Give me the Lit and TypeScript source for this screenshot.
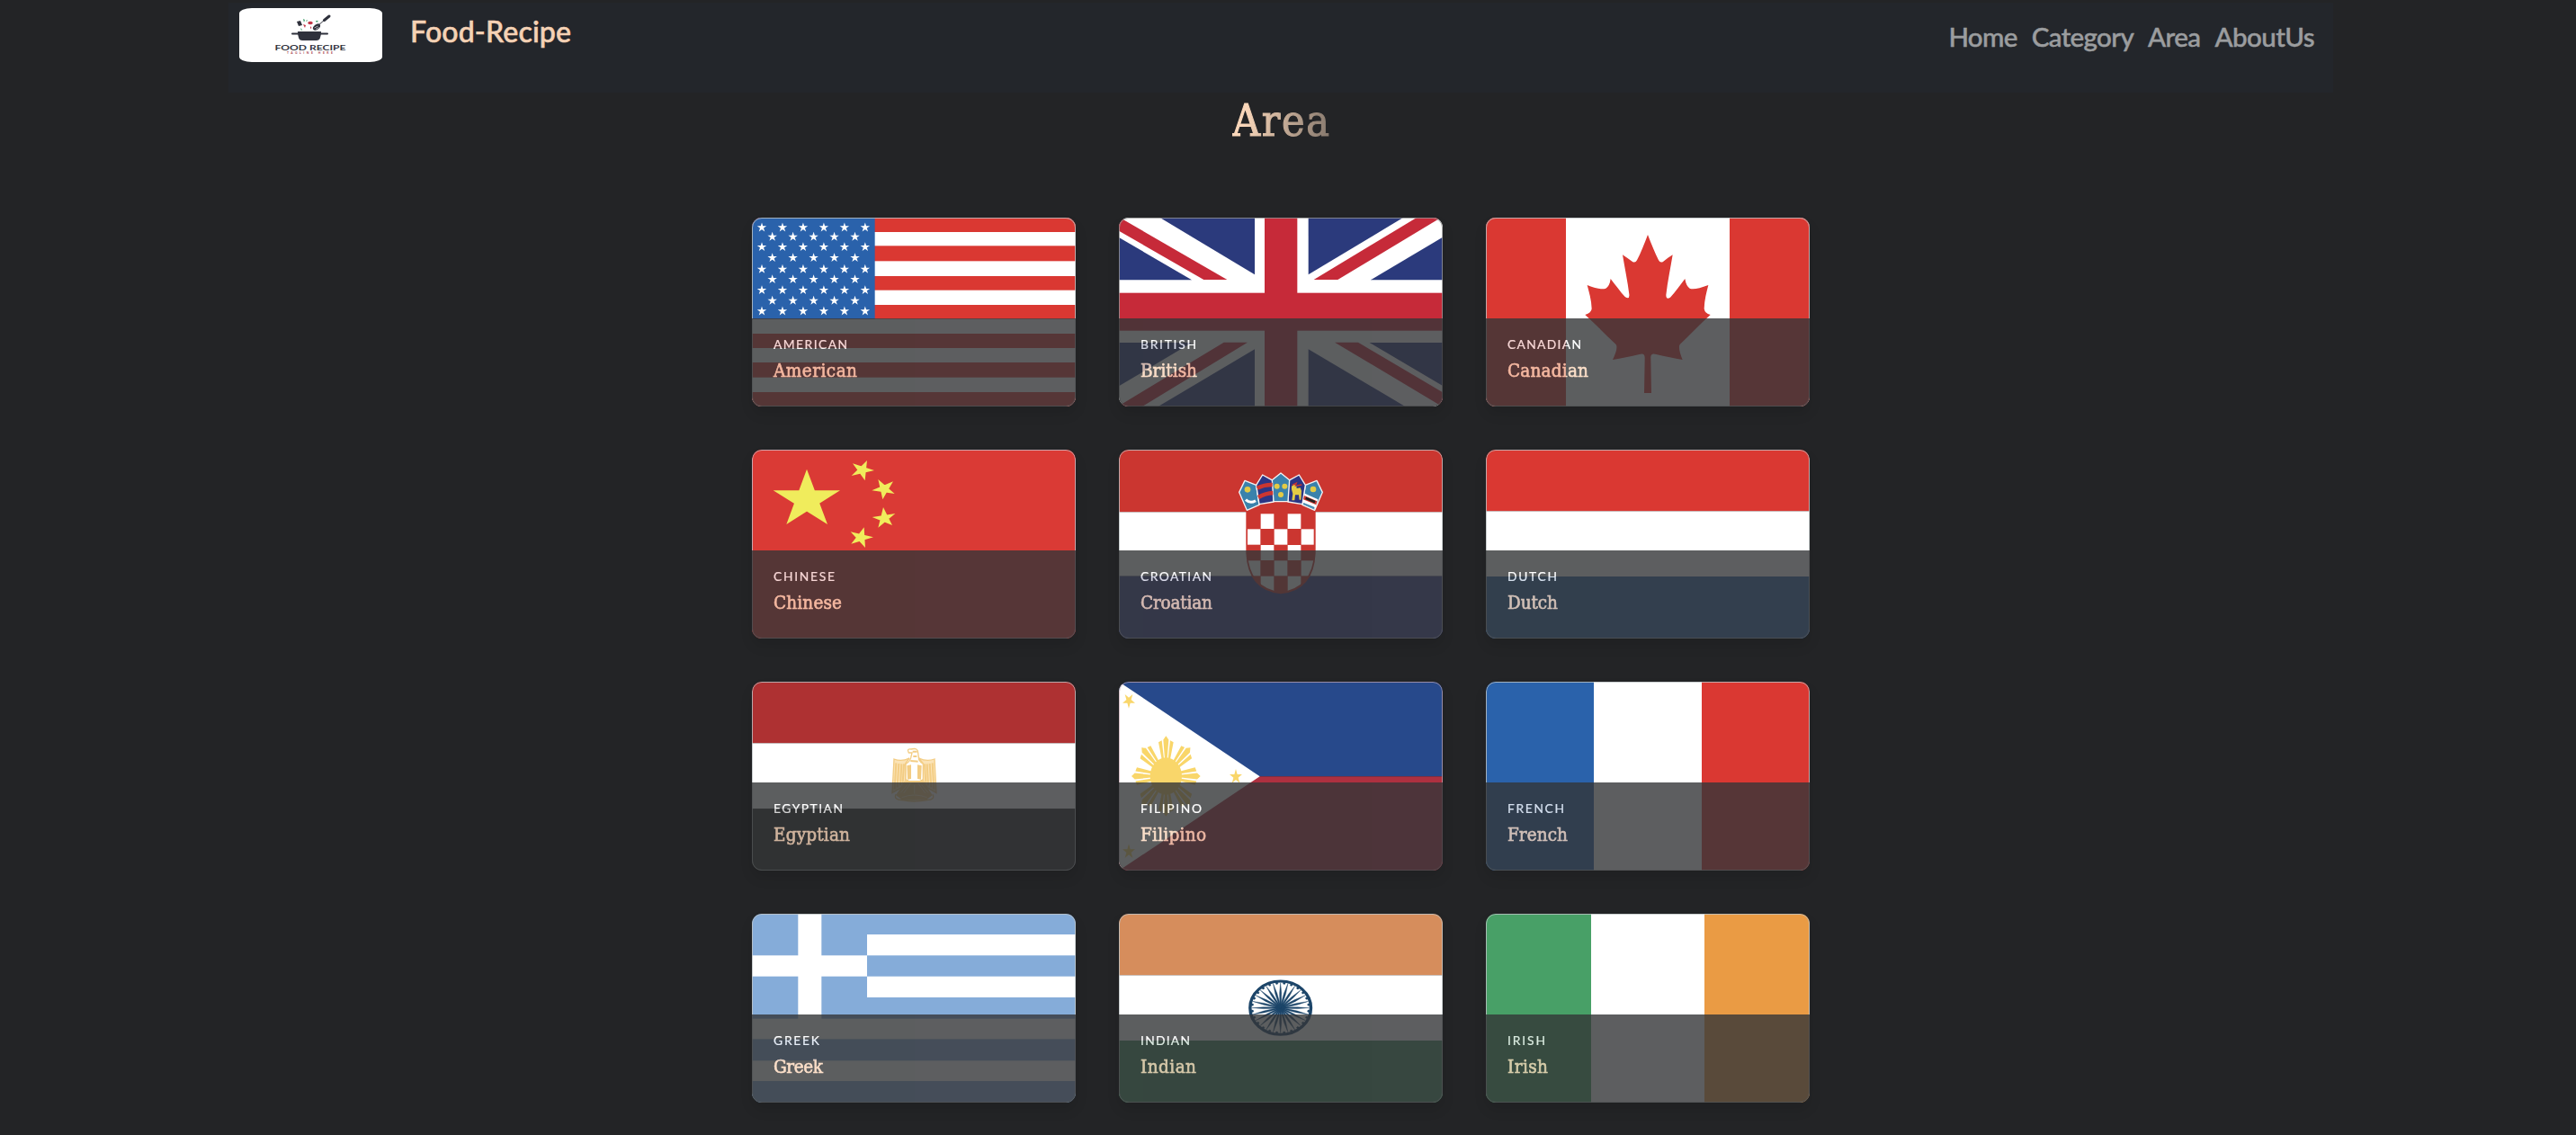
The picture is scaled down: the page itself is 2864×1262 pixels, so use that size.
import { LitElement, html, svg, css, type SVGTemplateResult } from "lit";
import { customElement, property } from "lit/decorators.js";

/* Text whose tracking is adjusted so that it fills a set measure. */
@customElement("tracked-text")
class TrackedText extends LitElement {
  @property() text = "";
  @property({ type: Number }) measure = 0;

  static styles = css`
    :host { display: block; white-space: nowrap; }
    .text { display: inline-block; }
  `;

  updated() {
    const el = this.renderRoot.querySelector(".text") as HTMLElement;
    el.style.letterSpacing = "0px";
    const natural = el.getBoundingClientRect().width;
    const gaps = this.text.length - 1;
    if (this.measure && gaps > 0) {
      el.style.letterSpacing = `${((this.measure - natural) / gaps).toFixed(3)}px`;
    }
  }

  render() {
    return html`<span class="text">${this.text}</span>`;
  }
}

const RED = "#da3832";
const BLUE = "#2a62ab";

const rect = (x: number, y: number, x2: number, y2: number, fill: string) =>
  svg`<rect x=${x} y=${y} width=${x2 - x} height=${y2 - y} fill=${fill}></rect>`;
const poly = (points: string, fill: string) => svg`<polygon points=${points} fill=${fill}></polygon>`;

/* Pentagram through five outer points; the nonzero rule fills its centre. */
const starThrough = (p: number[][], fill: string) =>
  poly([0, 2, 4, 1, 3].map((i) => p[i].join(",")).join(" "), fill);
const star = (cx: number, cy: number, r: number, fill: string, turn = 0, sy = 1) =>
  starThrough(
    [0, 1, 2, 3, 4].map((i) => {
      const a = ((i * 72 + turn - 90) * Math.PI) / 180;
      return [+(cx + r * Math.cos(a)).toFixed(1), +(cy + sy * r * Math.sin(a)).toFixed(1)];
    }),
    fill,
  );

function american() {
  const edges = [66, 114, 160, 211, 261, 308, 357, 404, 453, 501, 549, 599, 648, 696];
  const rows = [99, 130, 164, 200, 238, 272, 308, 343, 378];
  return svg`
    ${rect(48, 66, 1128, 696, "#fff")}
    ${edges.slice(0, -1).map((y, i) => (i % 2 ? null : rect(48, y, 1128, edges[i + 1], RED)))}
    ${rect(48, 66, 458, 404, BLUE)}
    ${rows.map((y, r) =>
      Array.from({ length: r % 2 ? 5 : 6 }, (_, c) => star((r % 2 ? 116 : 81) + c * 68.9, y, 16.5, "#fff")),
    )}`;
}

function british() {
  const blue = "#2b3a7c";
  const red = "#c62a39";
  return svg`
    ${rect(42, 66, 1122, 696, "#fff")}
    ${poly("179,66 495,66 495,256", blue)}${poly("42,132 42,274 285,274", blue)}
    ${poly("674,66 990,66 674,256", blue)}${poly("1122,131 1122,274 881,274", blue)}
    ${poly("42,483 285,483 42,628", blue)}${poly("495,505 495,696 173,696", blue)}
    ${poly("674,505 674,696 997,696", blue)}${poly("878,483 1122,483 1122,627", blue)}
    ${poly("42,64 42,110 325,273 403,273", red)}${poly("1035,66 1116,66 772,273 692,273", red)}
    ${poly("392,482 471,482 120,696 42,696 42,694", red)}${poly("762,482 840,482 1122,649 1122,696 1120,696", red)}
    ${rect(42, 317, 1122, 443, red)}${rect(528, 66, 637, 696, red)}`;
}

function canadian() {
  return svg`
    ${rect(36, 66, 1116, 696, "#fff")}
    ${rect(36, 66, 303, 696, RED)}${rect(849, 66, 1116, 696, RED)}
    <path fill=${RED} d="M576 123 C588 154 600 184 612 208 Q618 219 628 212 C638 204 648 197 659 190
      C652 234 642 280 637 324 Q637 341 651 332 C669 313 684 290 700 270 Q704 294 716 302 Q733 308 778 291
      C772 314 765 340 764 370 Q766 385 785 390 C748 423 718 456 683 489 Q676 500 692 540
      C664 535 635 530 604 522 Q584 516 586 536 L588 651 H564 L566 536 Q567 516 548 522
      C518 530 488 535 459 540 Q478 500 470 489 C434 456 404 423 367 390 Q388 384 389 370
      C388 340 380 314 374 291 Q419 309 436 302 Q449 294 452 270 C468 290 484 313 500 330
      Q516 341 514 322 C509 280 499 234 492 190 C503 197 514 205 524 212 Q534 219 540 208 C553 184 564 154 576 123Z"></path>`;
}

function chinese() {
  const gold = "#f0ec5c";
  return svg`
    ${rect(48, 60, 1128, 690, "#da3a35")}
    ${starThrough([[231, 125], [342, 196], [300, 309], [163, 309], [119, 196]], gold)}
    ${starThrough([[432, 96], [456, 129], [425, 163], [380, 147], [384, 106]], gold)}
    ${starThrough([[469, 159], [519, 166], [524, 207], [484, 226], [448, 196]], gold)}
    ${starThrough([[486, 252], [526, 273], [516, 312], [469, 320], [449, 285]], gold)}
    ${starThrough([[422, 319], [453, 352], [426, 387], [379, 374], [377, 334]], gold)}`;
}

function croatian() {
  const red = "#cb3630";
  const xs = [471, 515, 560, 605, 650, 693];
  const ys = [274, 325, 378, 430, 482, 536];
  const teal = "#3a82ac";
  const navy = "#2b3584";
  const gold = "#e3cb45";
  return svg`
    ${rect(42, 60, 1122, 268, red)}${rect(42, 268, 1122, 482, "#fff")}${rect(42, 482, 1122, 690, "#39408c")}
    <clipPath id="shield"><path d="M471 268 H693 V405 Q688 520 582 535 Q476 520 471 405Z"></path></clipPath>
    <path fill=${red} d="M466 240 H698 V405 Q692 530 582 541 Q472 530 466 405Z"></path>
    <g clip-path="url(#shield)">
      ${ys.slice(0, 5).map((y, r) =>
        xs.slice(0, 5).map((x, c) => ((r + c) % 2 ? rect(x, y, xs[c + 1] - 1, ys[r + 1] - 1, "#fff") : null)),
      )}
    </g>
    <g stroke="#f4f4f4" stroke-width="4" stroke-linejoin="round">
      <path fill=${teal} d="M462 163 L500 178 L510 244 L469 262 L443 202Z"></path>
      <path fill=${teal} d="M702 163 L664 178 L654 244 L695 262 L721 202Z"></path>
      <path fill=${navy} d="M521 144 L556 163 L558 234 L510 242 L500 178Z"></path>
      <path fill=${navy} d="M643 144 L608 163 L606 234 L654 242 L664 178Z"></path>
      <path fill=${teal} d="M582 138 L611 161 L606 233 H558 L553 161Z"></path>
    </g>
    <path fill="none" stroke=${red} stroke-width="13" d="M503 188 Q529 176 554 177 M507 219 Q532 205 556 204"></path>
    <path fill="none" stroke="#fff" stroke-width="9" d="M465 227 Q480 241 498 230"></path>
    <g fill=${gold}>
      <circle cx="471" cy="193" r="10"></circle><circle cx="690" cy="192" r="10"></circle>
      <circle cx="569" cy="182" r="9"></circle><circle cx="595" cy="182" r="9"></circle><circle cx="582" cy="210" r="9"></circle>
      <path d="M618 182 l8 -6 8 3 1 10 12 -2 4 10 -2 30 h-5 l-2 -16 -12 0 -2 18 h-9 l3 -22 -4 -14z"></path>
    </g>
    <path fill="none" stroke=${red} stroke-width="4" d="M620 178 L634 171 L630 182 M636 180 L652 177"></path>
    ${poly("662,206 706,226 697,258 654,241", "#fff")}
    ${poly("660,213 703,232 700,244 657,226", red)}
    <path stroke="#222" stroke-width="8" d="M665 221 L696 235"></path>
    <path stroke=${teal} stroke-width="5" d="M657 239 L694 254"></path>`;
}

function dutch() {
  return svg`${rect(36, 60, 1116, 265, RED)}${rect(36, 265, 1116, 483, "#fff")}${rect(36, 483, 1116, 690, "#2f63a6")}`;
}

function egyptian() {
  const g = "#f3cd84";
  return svg`
    ${rect(48, 54, 1128, 259, "#ae3132")}${rect(48, 259, 1128, 478, "#fff")}${rect(48, 478, 1128, 684, "#232323")}
    <g fill="#fbe3b6" stroke=${g} stroke-width="4">
      <path d="M573 309 Q547 322 522 312 L516 425 L545 408 L561 382 L560 327Z"></path>
      <path d="M605 309 Q631 322 657 312 L663 425 L634 408 L618 382 L619 327Z"></path>
      <path fill="#fff" d="M569 286 Q566 277 579 279 Q602 273 602 291 L605 314 Q612 326 619 328 V380 L590 396 L561 380 V328 Q574 322 578 308 L582 291 H571Z"></path>
    </g>
    <g stroke=${g} stroke-width="6" fill="none">
      <path d="M529 325 L524 412 M538 327 L533 406 M547 328 L543 400 M555 328 L551 392 M650 325 L655 412 M641 327 L646 406 M632 328 L636 400 M624 328 L628 392"></path>
      <path d="M584 287 H599 M586 303 H598 M577 318 L602 320"></path>
    </g>
    <path fill=${g} d="M565 334 L579 331 V378 L567 380Z M614 334 L600 331 V378 L612 380Z M561 384 H618 L650 432 L629 449 H550 L528 432Z"></path>
    <path fill="none" stroke="#fbe8c4" stroke-width="2.5" d="M578 392 L554 426 M590 398 V428 M602 392 L626 426 M566 398 L544 424 M614 398 L636 424 M548 440 Q590 424 632 440"></path>
    <path fill="none" stroke=${g} stroke-width="4" d="M528 430 Q520 447 548 449 Q590 457 632 449 Q660 447 651 430"></path>`;
}

function filipino() {
  const gold = "#f9d66a";
  return svg`
    ${rect(42, 54, 1122, 370, "#27498b")}${rect(42, 370, 1122, 684, "#ae3040")}
    ${poly("42,54 512,370 42,684", "#fff")}
    <g fill=${gold} transform="translate(199 369) scale(1 1.17)">
      <circle r="53"></circle>
      ${[0, 45, 90, 135, 180, 225, 270, 315].map(
        (a) => svg`<path transform="rotate(${a})"
          d="M-4 -50 L-9 -104 L0 -115 L9 -104 L4 -50Z M-7 -50 L-14 -102 L-25 -97 L-14 -48Z M7 -50 L14 -102 L25 -97 L14 -48Z"></path>`,
      )}
    </g>
    ${star(75, 117, 22, gold, 180, 1.18)}${star(432, 371, 22, gold, 0, 1.18)}${star(75, 621, 22, gold, 0, 1.18)}`;
}

function french() {
  return svg`${rect(36, 54, 396, 684, BLUE)}${rect(396, 54, 756, 684, "#fff")}${rect(756, 54, 1116, 684, RED)}`;
}

function greek() {
  const bands = [[117, 187, 432], [257, 327, 432], [398, 466, 48], [538, 606, 48]];
  return svg`
    ${rect(48, 48, 1128, 678, "#85acd9")}
    ${bands.map(([y, y2, x]) => rect(x, y, 1128, y2, "#fff"))}
    ${rect(202, 48, 280, 400, "#fff")}${rect(48, 187, 432, 257, "#fff")}`;
}

function indian() {
  const navy = "#1c4569";
  return svg`
    ${rect(42, 48, 1122, 253, "#d68d5c")}${rect(42, 253, 1122, 471, "#fff")}${rect(42, 471, 1122, 678, "#438b60")}
    <g transform="translate(581 362) scale(1.14 1)" stroke=${navy} fill=${navy}>
      <circle r="89" fill="none" stroke-width="9"></circle>
      <circle r="13"></circle>
      ${Array.from({ length: 24 }, (_, i) => svg`<g transform="rotate(${i * 15})">
        <path stroke-width="1" d="M-2 0 L-2.8 -50 L0 -84 L2.8 -50 L2 0Z"></path></g>`)}
      ${Array.from({ length: 24 }, (_, i) => svg`<circle transform="rotate(${i * 15 + 7.5})" cy="-83" r="3.5"></circle>`)}
    </g>`;
}

function irish() {
  return svg`${rect(36, 48, 387, 678, "#48a067")}${rect(387, 48, 765, 678, "#fff")}${rect(765, 48, 1116, 678, "#ea9b44")}`;
}

interface Area {
  name: string;
  label: number;
  title: number;
  box: string;
  edge: string;
  flag: () => SVGTemplateResult;
}

const GREY = "rgba(190,196,198,.8)";
const AREAS: Area[] = [
  { name: "American", label: 82, title: 93, box: "48 66 1080 630", edge: GREY, flag: american },
  { name: "British", label: 62, title: 63, box: "42 66 1080 630", edge: "rgba(150,150,150,.8)", flag: british },
  { name: "Canadian", label: 82, title: 90, box: "36 66 1080 630", edge: GREY, flag: canadian },
  { name: "Chinese", label: 68, title: 76, box: "48 60 1080 630", edge: "rgba(200,190,200,.8)", flag: chinese },
  { name: "Croatian", label: 79, title: 80, box: "42 60 1080 630", edge: GREY, flag: croatian },
  { name: "Dutch", label: 55, title: 56, box: "36 60 1080 630", edge: GREY, flag: dutch },
  { name: "Egyptian", label: 77, title: 85, box: "48 54 1080 630", edge: GREY, flag: egyptian },
  { name: "Filipino", label: 68, title: 73, box: "42 54 1080 630", edge: "rgba(200,170,180,.7)", flag: filipino },
  { name: "French", label: 63, title: 67, box: "36 54 1080 630", edge: GREY, flag: french },
  { name: "Greek", label: 51, title: 55, box: "48 48 1080 630", edge: GREY, flag: greek },
  { name: "Indian", label: 55, title: 62, box: "42 48 1080 630", edge: GREY, flag: indian },
  { name: "Irish", label: 42, title: 45, box: "36 48 1080 630", edge: GREY, flag: irish },
];

@customElement("area-card")
class AreaCard extends LitElement {
  @property({ attribute: false }) area!: Area;

  static styles = css`
    :host { display: block; }
    .card {
      display: grid;
      width: 360px;
      height: 210px;
      border-radius: 11px;
      overflow: hidden;
      box-shadow: 0 8px 14px rgba(0, 0, 0, 0.1);
    }
    .flag, .edge, .caption { grid-area: 1 / 1; }
    .flag { display: block; width: 360px; height: 210px; }
    .edge { border: 1px solid; border-radius: 11px; }
    .caption {
      align-self: end;
      box-sizing: border-box;
      height: 98px;
      padding: 20px 24px 0;
      background: #343638;
      opacity: 0.8;
    }
    .label {
      color: #fff;
      font: 400 13.8px/17px Lato, sans-serif;
      -webkit-text-stroke: 0.2px #fff;
      text-transform: uppercase;
    }
    .title {
      margin-top: 9px;
      color: #fad7bb;
      font: 400 20.5px/24px "DejaVu Serif Condensed", "DejaVu Serif", serif;
      font-stretch: condensed;
      -webkit-text-stroke: 0.6px #fad7bb;
    }
  `;

  render() {
    const a = this.area;
    return html`<article class="card">
      <svg class="flag" viewBox=${a.box} preserveAspectRatio="none">${a.flag()}</svg>
      <div class="edge" style="border-color:${a.edge}"></div>
      <div class="caption">
        <tracked-text class="label" .text=${a.name.toUpperCase()} .measure=${a.label}></tracked-text>
        <tracked-text class="title" .text=${a.name} .measure=${a.title}></tracked-text>
      </div>
    </article>`;
  }
}

@customElement("app-root")
class AppRoot extends LitElement {
  static styles = css`
    :host { display: block; background: #232426; }
    .page { width: 2848px; height: 1262px; overflow: hidden; padding-top: 3px; box-sizing: border-box; }
    .header {
      display: flex;
      align-items: flex-start;
      box-sizing: border-box;
      width: 2340px;
      height: 100px;
      margin: 0 auto;
      padding: 6px 21px 0 12px;
      background: #23262b;
    }
    .logo { display: block; width: 159px; height: 60px; border-radius: 14px / 6px; background: #fff; }
    .logo-name { font: 700 7.6px Lato, sans-serif; fill: #34353f; }
    .logo-tag { font: 700 3.4px Lato, sans-serif; fill: #a8444f; }
    .brand {
      margin: 7px 0 0 31px;
      color: #f5d2b5;
      font: 500 32px/38px "Gill Sans", Lato, sans-serif;
      -webkit-text-stroke: 0.6px #f5d2b5;
    }
    .nav { display: flex; gap: 16px; margin: 14px 0 0 auto; }
    .link {
      color: #9b9d9f;
      font: 500 29.5px/36px "Gill Sans", Lato, sans-serif;
      -webkit-text-stroke: 0.5px #9b9d9f;
    }
    .heading {
      width: 108px;
      margin: 3px auto 0;
      font: 400 48px/56px "DejaVu Serif Condensed", "DejaVu Serif", serif;
      font-stretch: condensed;
      color: transparent;
      -webkit-text-stroke: 1.1px transparent;
      background: linear-gradient(100deg, #fad7ba 15%, #7d7167 105%);
      -webkit-background-clip: text;
      background-clip: text;
    }
    .grid {
      display: grid;
      grid-template-columns: repeat(3, 360px);
      gap: 48px;
      justify-content: center;
      margin-top: 80px;
    }
  `;

  render() {
    return html`<main class="page">
      <header class="header">
        <svg class="logo" viewBox="0 0 159 60">
          <g fill="#2f313c">
            <path d="M65 26 H91 Q91 36 86 36 H70 Q65 36 65 26Z"></path>
            <rect x="58" y="27.6" width="41" height="2" rx="1"></rect>
            <path d="M64 15 l4 -1 2 5 -4 1z"></path>
            <ellipse cx="86" cy="21" rx="4.6" ry="2.8" transform="rotate(-38 86 21)"></ellipse>
          </g>
          <path d="M87 20 L96 12" stroke="#2f313c" stroke-width="1"></path>
          <path d="M94.5 13.5 L100 9" stroke="#2f313c" stroke-width="3" stroke-linecap="round"></path>
          <path d="M83.5 22 l4 -2 M85 23.5 l3.5 -2" stroke="#fff" stroke-width=".6"></path>
          <g fill="#c23848">
            <ellipse cx="79" cy="16.5" rx="2.8" ry="1.8"></ellipse>
            <path d="M71 18 l3 1 -1 3z M79 20 l1.5 2 -1.5 1z"></path>
          </g>
          <g fill="#3f9d6a">
            <path d="M71 12 l2 1 -1 3z M74 14 l2 -1 -1 2z M85 14 l3 0 -2 2z M68 22 l2 2 -1 1z"></path>
          </g>
          <text class="logo-name" x="39.5" y="46.8" textLength="79" lengthAdjust="spacingAndGlyphs">FOOD RECIPE</text>
          <text class="logo-tag" x="53" y="51.4" textLength="51">TAGLINE HERE</text>
        </svg>
        <tracked-text class="brand" .text=${"Food-Recipe"} .measure=${179}></tracked-text>
        <nav class="nav">
          <tracked-text class="link" .text=${"Home"} .measure=${77}></tracked-text>
          <tracked-text class="link" .text=${"Category"} .measure=${114}></tracked-text>
          <tracked-text class="link" .text=${"Area"} .measure=${59}></tracked-text>
          <tracked-text class="link" .text=${"AboutUs"} .measure=${111}></tracked-text>
        </nav>
      </header>
      <tracked-text class="heading" .text=${"Area"} .measure=${108}></tracked-text>
      <section class="grid">
        ${AREAS.map((a) => html`<area-card .area=${a}></area-card>`)}
      </section>
    </main>`;
  }
}
